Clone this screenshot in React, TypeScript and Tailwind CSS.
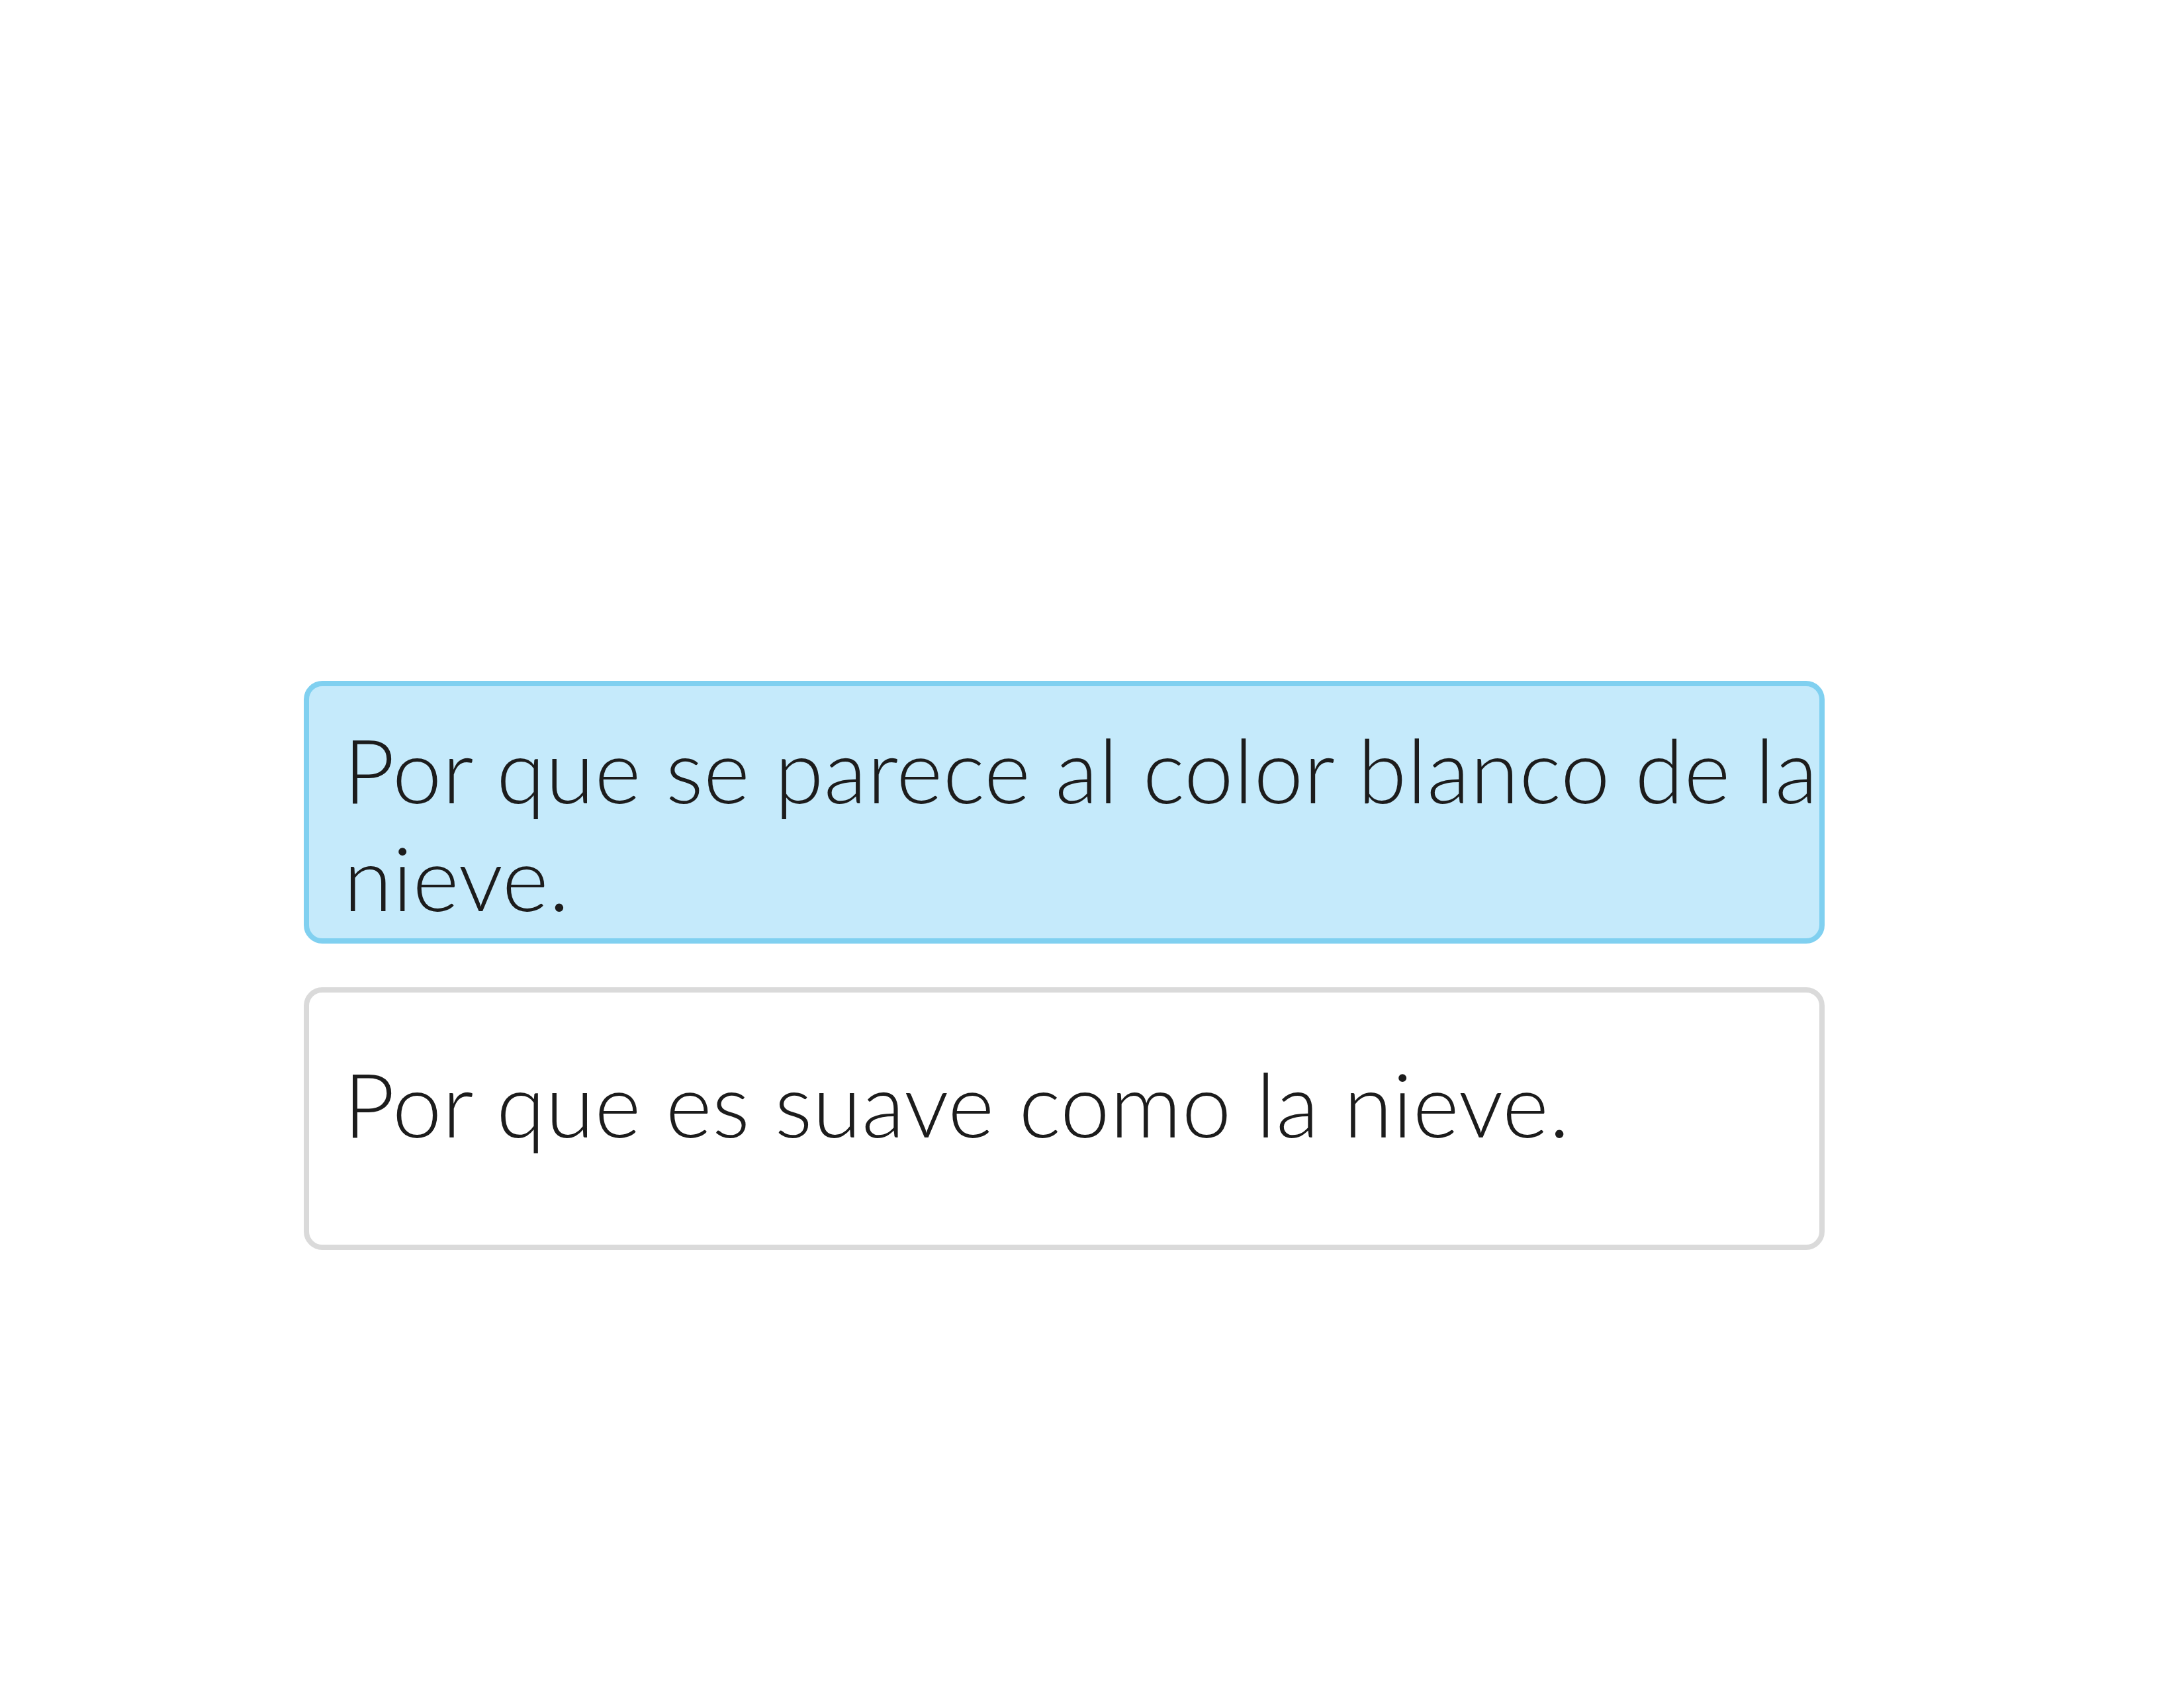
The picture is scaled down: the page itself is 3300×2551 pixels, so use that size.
import React from 'react'

const App: React.FC = () => {
  return (
    <div className="w-[3300px] h-[2551px] bg-white pt-[1029px] pl-[459px] font-['Lato','Liberation_Sans',sans-serif] font-light text-[#1c1c1c]">
      <div className="flex flex-col gap-[66px] w-[2298px]">
        {/* selected answer */}
        <div className="h-[397px] rounded-[28px] border-[8px] border-[#80d0f0] bg-[#c5eafb] pl-[52px] pt-[44px]">
          <p className="-mr-[24px] text-[134px] leading-[163px] tracking-[0.5px]">Por que se parece al color blanco de la nieve.</p>
        </div>

        {/* other answer */}
        <div className="h-[397px] rounded-[28px] border-[8px] border-[#dadada] bg-white pl-[52px] pt-[86px]">
          <p className="-mr-[24px] text-[134px] leading-[163px] tracking-[0.5px]">Por que es suave como la nieve.</p>
        </div>
      </div>
    </div>
  )
}

export default App
